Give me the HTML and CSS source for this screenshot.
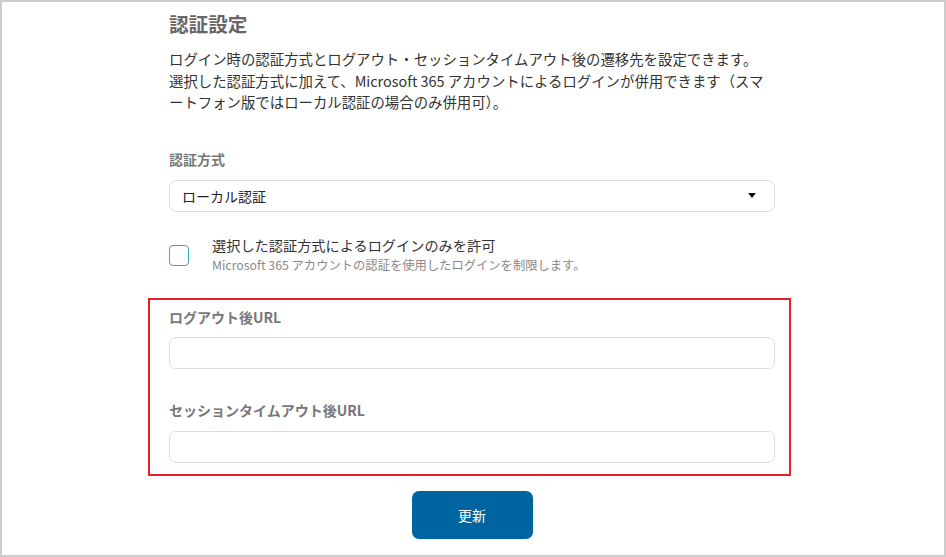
FILE: index.html
```html
<!DOCTYPE html>
<html lang="ja">
<head>
<meta charset="utf-8">
<title>認証設定</title>
<link rel="stylesheet" href="styles.css">
</head>
<body>
<div class="frame">
  <div class="column">
    <h1 class="title">認証設定</h1>
    <p class="lead">ログイン時の認証方式とログアウト・セッションタイムアウト後の遷移先を設定できます。<br>選択した認証方式に加えて、Microsoft 365 アカウントによるログインが併用できます（スマ<br>ートフォン版ではローカル認証の場合のみ併用可）。</p>

    <div class="field-label first">認証方式</div>
    <div class="select">
      <span class="select-text">ローカル認証</span>
      <span class="caret"></span>
    </div>

    <div class="check-row">
      <span class="checkbox"></span>
      <div class="check-text">
        <div class="check-main">選択した認証方式によるログインのみを許可</div>
        <div class="check-sub">Microsoft 365 アカウントの認証を使用したログインを制限します。</div>
      </div>
    </div>

    <div class="highlight">
      <div class="field-label">ログアウト後URL</div>
      <div class="input"></div>
      <div class="field-label second">セッションタイムアウト後URL</div>
      <div class="input"></div>
    </div>

    <div class="actions">
      <button class="btn" type="button">更新</button>
    </div>
  </div>
</div>
</body>
</html>
```

FILE: styles.css
```css
* { box-sizing: border-box; }
html, body { margin: 0; padding: 0; background: #ffffff; }
body {
  font-family: "Noto Sans CJK JP", "Noto Sans", sans-serif;
  color: #333333;
}
.frame {
  width: 946px;
  height: 557px;
  border: 2px solid #cccccc;
  padding: 9px 0 0 167px;
  overflow: hidden;
}
.column {
  width: 606px;
}
.title {
  margin: 0;
  font-size: 19.6px;
  line-height: 26px;
  font-weight: 700;
  color: #666666;
}
.lead {
  margin: 11px 0 0;
  width: 640px;
  font-size: 14.4px;
  line-height: 21.5px;
  color: #333333;
}
.field-label {
  font-size: 14px;
  line-height: 20px;
  font-weight: 700;
  color: #777777;
}
.field-label.first { margin-top: 36px; }
.field-label.second { margin-top: 31px; }
.select {
  margin-top: 11px;
  height: 32px;
  border: 1px solid #dddddd;
  border-radius: 7px;
  display: flex;
  align-items: center;
  justify-content: space-between;
  padding: 0 18px 0 12px;
}
.select-text {
  font-size: 14px;
  color: #222222;
}
.caret {
  width: 0;
  height: 0;
  border-left: 4px solid transparent;
  border-right: 4px solid transparent;
  border-top: 5px solid #111111;
}
.check-row {
  margin-top: 22px;
  display: flex;
  align-items: center;
  gap: 23px;
}
.checkbox {
  width: 20px;
  height: 21px;
  border: 1.5px solid #3aa6c2;
  border-radius: 4px;
  flex: none;
  margin-top: 4px;
}
.check-main {
  font-size: 14.2px;
  line-height: 22px;
  color: #333333;
}
.check-sub {
  font-size: 12.3px;
  line-height: 18px;
  color: #888888;
  white-space: nowrap;
}
.highlight {
  margin: 24px -16px 0 -21px;
  border: 2px solid #e3222b;
  padding: 7px 14px 11px 19px;
}
.input {
  margin-top: 10px;
  height: 32px;
  border: 1px solid #dddddd;
  border-radius: 7px;
}
.highlight .input:last-child { margin-top: 11px; }
.actions {
  display: flex;
  justify-content: center;
  margin-top: 15px;
}
.btn {
  width: 121px;
  height: 48px;
  border: none;
  border-radius: 7px;
  background: #0064a0;
  color: #ffffff;
  font-family: "Noto Sans CJK JP", "Noto Sans", sans-serif;
  font-size: 14px;
  padding: 0;
}
```
